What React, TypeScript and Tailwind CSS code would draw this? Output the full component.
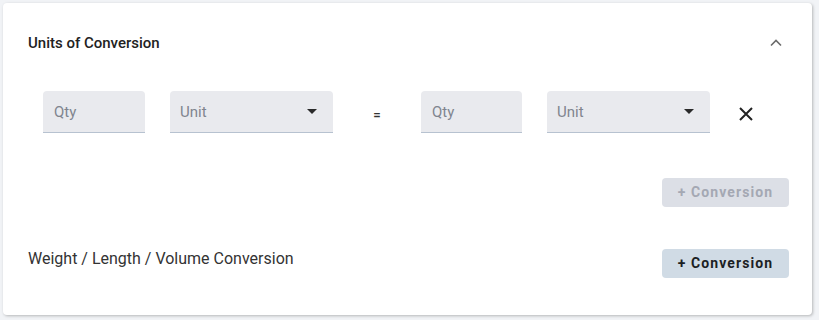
import React from "react";

function Caret() {
  return (
    <svg width="10" height="5" viewBox="0 0 10 5" className="block">
      <path d="M0 0 L10 0 L5 5 Z" fill="#2a2a2a" />
    </svg>
  );
}

function QtyField({ w }: { w: string }) {
  return (
    <div className={`${w} h-[42px] bg-[#e9eaee] rounded-t-[4px] border-b border-[#b7c2d0] flex items-center pl-[11px]`}>
      <span className="text-[15px] text-[#80858e] mt-[2px]">Qty</span>
    </div>
  );
}

function UnitField() {
  return (
    <div className="w-[163px] h-[42px] bg-[#e9eaee] rounded-t-[4px] border-b border-[#b7c2d0] flex items-center pl-[10px] pr-[16px] justify-between">
      <span className="text-[15px] text-[#80858e] mt-[2px]">Unit</span>
      <Caret />
    </div>
  );
}

export default function App() {
  return (
    <div className="w-[819px] h-[320px] bg-[#f1f3f6] p-[3px] font-['Roboto',sans-serif]">
      <div className="w-[809px] h-[312px] bg-white rounded-[4px] shadow-[1px_1px_3px_rgba(0,0,0,0.25)] flex flex-col px-[25px]">
        <div className="flex items-center justify-between pt-[30px] h-[50px]">
          <span className="text-[15px] font-medium text-[#222] leading-[20px]">Units of Conversion</span>
          <svg width="14" height="10" viewBox="0 0 14 10" className="mr-[4px]">
            <path d="M2 7.5 L7 2.5 L12 7.5" fill="none" stroke="#6b6b6b" strokeWidth="1.6" />
          </svg>
        </div>
        <div className="flex items-center mt-[38px] pl-[15px]">
          <QtyField w="w-[102px]" />
          <div className="w-[25px]" />
          <UnitField />
          <div className="w-[88px] flex justify-center pt-[5px]">
            <span className="text-[13px] font-bold text-[#333]">=</span>
          </div>
          <QtyField w="w-[101px]" />
          <div className="w-[25px]" />
          <UnitField />
          <div className="ml-[29px] pt-[3px]">
            <svg width="14" height="14" viewBox="0 0 14 14" className="block">
              <path d="M1 1 L13 13 M13 1 L1 13" stroke="#222" strokeWidth="2" />
            </svg>
          </div>
        </div>
        <div className="flex justify-end mt-[45px]">
          <button className="w-[127px] h-[29px] rounded-[4px] bg-[#dcdfe6] text-[14px] font-bold tracking-[1.1px] text-[#a4a8b3] mr-[-2px]">
            + Conversion
          </button>
        </div>
        <div className="flex justify-between items-start mt-[42px]">
          <span className="text-[16px] text-[#333] leading-[20px]">Weight / Length / Volume Conversion</span>
          <button className="w-[127px] h-[29px] rounded-[4px] bg-[#d0dbe5] text-[14px] font-bold tracking-[1.1px] text-[#1c1f24] mr-[-2px]">
            + Conversion
          </button>
        </div>
      </div>
    </div>
  );
}
